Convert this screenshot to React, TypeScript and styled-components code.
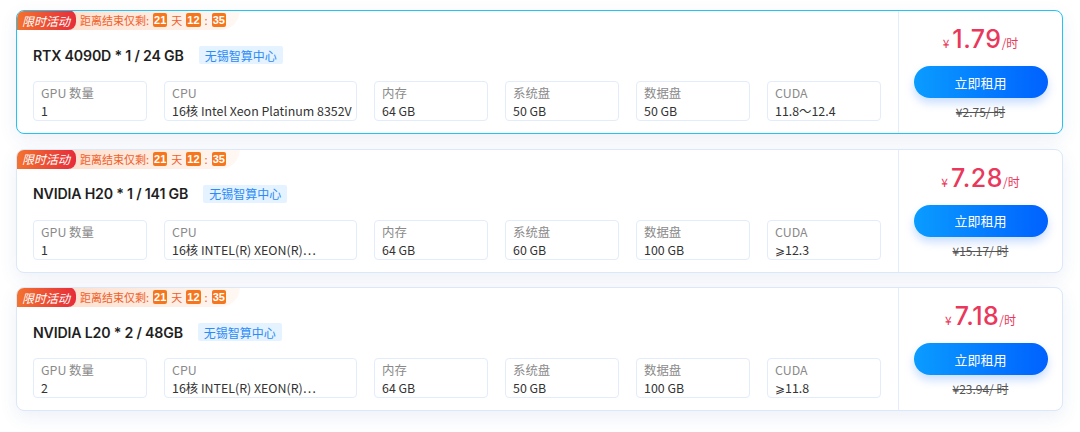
import styled, { createGlobalStyle, css } from "styled-components";

const GlobalStyle = createGlobalStyle`
  body {
    margin: 0;
    background: #ffffff;
    font-family: "Noto Sans", "Noto Sans CJK SC", sans-serif;
  }
`;

const Page = styled.div`
  display: flex;
  flex-direction: column;
  gap: 14.5px;
  padding: 10px 17px 20px 16px;
  width: 1080px;
  box-sizing: border-box;
`;

const Card = styled.div<{ $active?: boolean }>`
  display: flex;
  height: 124px;
  box-sizing: border-box;
  background: #fff;
  border-radius: 8px;
  border: 1px solid ${(p) => (p.$active ? "#22c3f5" : "#dce7fa")};
  box-shadow: 0 6px 18px rgba(40, 90, 170, 0.09);
  overflow: hidden;
`;

const Main = styled.div`
  flex: 1;
  display: flex;
  flex-direction: column;
`;

const PromoRow = styled.div`
  display: flex;
  align-items: stretch;
  height: 20px;
  margin: -1px 0 0 -1px;
`;

const PromoBadge = styled.div`
  position: relative;
  z-index: 1;
  width: 60px;
  display: flex;
  align-items: center;
  justify-content: center;
  color: #fff;
  font-size: 12px;
  font-style: italic;
  font-family: "Noto Sans CJK SC", sans-serif;
  background: linear-gradient(90deg, #f3742f, #e62c3b);
  border-radius: 8px 8px 8px 0;
`;

const Countdown = styled.div`
  width: 170px;
  margin-left: -6px;
  padding-left: 10px;
  box-sizing: border-box;
  display: flex;
  align-items: center;
  gap: 4px;
  font-size: 11px;
  color: #f0612b;
  font-family: "Noto Sans CJK SC", sans-serif;
  background: linear-gradient(90deg, #fde0cf, #fff8f3);
  border-radius: 0 0 22px 0;
`;

const Digit = styled.span`
  display: inline-flex;
  align-items: center;
  justify-content: center;
  min-width: 14px;
  height: 14px;
  padding: 0 1px;
  box-sizing: border-box;
  background: #f6761e;
  color: #fff;
  font-family: "Liberation Sans", sans-serif;
  font-size: 11px;
  font-weight: 700;
  border-radius: 2px;
`;

const Body = styled.div`
  padding: 15px 17px 0 16px;
  display: flex;
  flex-direction: column;
  gap: 16px;
`;

const TitleRow = styled.div`
  display: flex;
  align-items: center;
  gap: 15px;
  height: 20px;
`;

const Title = styled.div`
  font-family: "Inter", "Noto Sans CJK SC", sans-serif;
  font-size: 14.2px;
  font-weight: 600;
  color: #1f1f1f;
  letter-spacing: -0.2px;
`;

const Tag = styled.span`
  height: 18px;
  padding: 0 6px;
  display: inline-flex;
  align-items: center;
  font-size: 12px;
  color: #2b8cf5;
  background: #e5f2ff;
  border-radius: 2px;
  font-family: "Noto Sans CJK SC", sans-serif;
`;

const Specs = styled.div`
  display: grid;
  grid-template-columns: 114px 193px repeat(4, 114px);
  gap: 17px;
`;

const Spec = styled.div`
  height: 40px;
  box-sizing: border-box;
  padding: 2px 2px 2px 7px;
  border: 1px solid #e2ecfb;
  border-radius: 4px;
  font-family: "Noto Sans CJK SC", sans-serif;
  font-size: 12.4px;
  line-height: 18px;
  white-space: nowrap;
  overflow: hidden;
`;

const SpecLabel = styled.div`
  color: #8a8a8a;
`;

const SpecValue = styled.div`
  color: #333;
  overflow: hidden;
  text-overflow: ellipsis;
`;

const PriceCol = styled.div`
  width: 164px;
  border-left: 1px solid #e2ecfb;
  display: flex;
  flex-direction: column;
  align-items: center;
  padding-top: 13px;
  box-sizing: border-box;
`;

const Price = styled.div`
  display: flex;
  align-items: baseline;
  color: #e9385b;
  height: 32px;
  font-family: "Noto Sans CJK SC", sans-serif;
`;

const PriceSmall = styled.span<{ $left?: boolean }>`
  font-size: 12px;
  ${(p) =>
    p.$left &&
    css`
      margin-right: 3px;
    `}
`;

const PriceBig = styled.span`
  font-family: "Inter", sans-serif;
  font-size: 25px;
  font-weight: 500;
  letter-spacing: 0.5px;
`;

const RentButton = styled.button`
  margin-top: 10px;
  width: 134px;
  height: 32px;
  border: none;
  border-radius: 16px;
  color: #fff;
  font-size: 13px;
  font-family: "Noto Sans CJK SC", sans-serif;
  background: linear-gradient(90deg, #0a9cff, #0061ff);
  box-shadow: 0 5px 10px rgba(0, 98, 255, 0.22);
  cursor: pointer;
`;

const OldPrice = styled.div`
  margin-top: 5px;
  font-size: 12px;
  color: #555;
  text-decoration: line-through;
  font-family: "Noto Sans CJK SC", sans-serif;
`;

type Item = {
  title: string;
  gpu: string;
  cpu: string;
  mem: string;
  sys: string;
  data: string;
  cuda: string;
  price: string;
  old: string;
  active?: boolean;
};

const items: Item[] = [
  {
    title: "RTX 4090D * 1 / 24 GB",
    gpu: "1",
    cpu: "16核 Intel Xeon Platinum 8352V",
    mem: "64 GB",
    sys: "50 GB",
    data: "50 GB",
    cuda: "11.8～12.4",
    price: "1.79",
    old: "¥2.75/ 时",
    active: true,
  },
  {
    title: "NVIDIA H20 * 1 / 141 GB",
    gpu: "1",
    cpu: "16核 INTEL(R) XEON(R)…",
    mem: "64 GB",
    sys: "60 GB",
    data: "100 GB",
    cuda: "⩾12.3",
    price: "7.28",
    old: "¥15.17/ 时",
  },
  {
    title: "NVIDIA L20 * 2 / 48GB",
    gpu: "2",
    cpu: "16核 INTEL(R) XEON(R)…",
    mem: "64 GB",
    sys: "50 GB",
    data: "100 GB",
    cuda: "⩾11.8",
    price: "7.18",
    old: "¥23.94/ 时",
  },
];

export default function App() {
  return (
    <>
      <GlobalStyle />
      <Page>
        {items.map((it) => {
          const specs = [
            ["GPU 数量", it.gpu],
            ["CPU", it.cpu],
            ["内存", it.mem],
            ["系统盘", it.sys],
            ["数据盘", it.data],
            ["CUDA", it.cuda],
          ];
          return (
            <Card key={it.title} $active={it.active}>
              <Main>
                <PromoRow>
                  <PromoBadge>限时活动</PromoBadge>
                  <Countdown>
                    <span>距离结束仅剩:</span>
                    <Digit>21</Digit>
                    <span>天</span>
                    <Digit>12</Digit>
                    <span>:</span>
                    <Digit>35</Digit>
                  </Countdown>
                </PromoRow>
                <Body>
                  <TitleRow>
                    <Title>{it.title}</Title>
                    <Tag>无锡智算中心</Tag>
                  </TitleRow>
                  <Specs>
                    {specs.map(([label, value]) => (
                      <Spec key={label}>
                        <SpecLabel>{label}</SpecLabel>
                        <SpecValue>{value}</SpecValue>
                      </Spec>
                    ))}
                  </Specs>
                </Body>
              </Main>
              <PriceCol>
                <Price>
                  <PriceSmall $left>¥</PriceSmall>
                  <PriceBig>{it.price}</PriceBig>
                  <PriceSmall>/时</PriceSmall>
                </Price>
                <RentButton>立即租用</RentButton>
                <OldPrice>{it.old}</OldPrice>
              </PriceCol>
            </Card>
          );
        })}
      </Page>
    </>
  );
}
